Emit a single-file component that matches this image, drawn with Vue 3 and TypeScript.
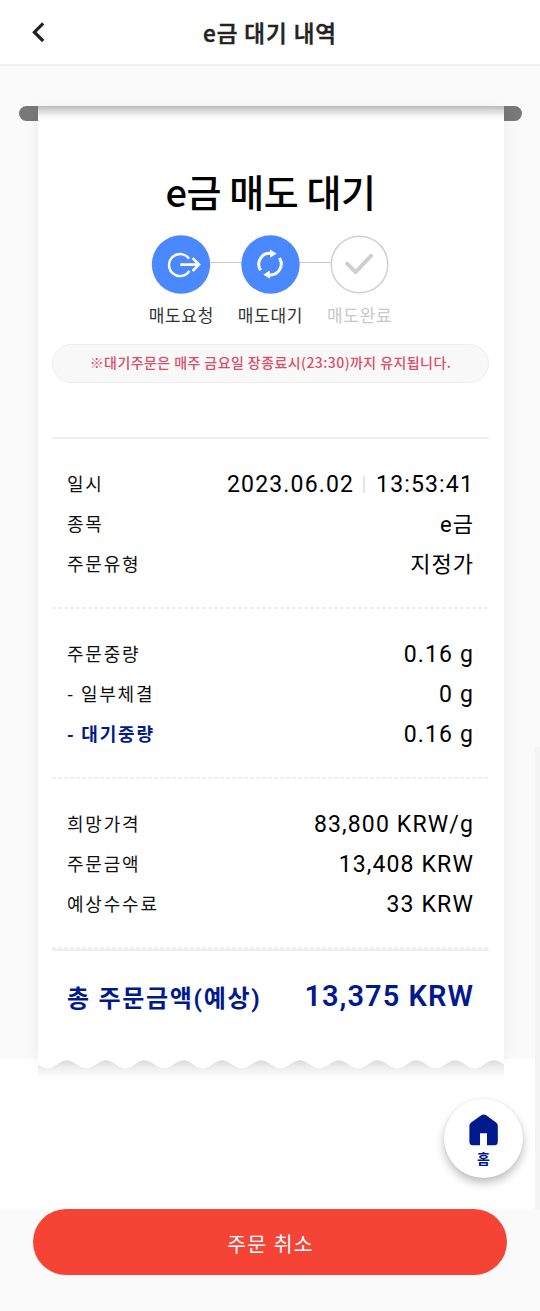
<script setup lang="ts">
interface Row {
  label: string
  value: string
  extra?: string
  accent?: boolean
  hangul?: boolean
}

const groups: Row[][] = [
  [
    { label: '일시', value: '2023.06.02', extra: '13:53:41' },
    { label: '종목', value: 'e금', hangul: true },
    { label: '주문유형', value: '지정가', hangul: true },
  ],
  [
    { label: '주문중량', value: '0.16 g' },
    { label: '- 일부체결', value: '0 g' },
    { label: '- 대기중량', value: '0.16 g', accent: true },
  ],
  [
    { label: '희망가격', value: '83,800 KRW/g' },
    { label: '주문금액', value: '13,408 KRW' },
    { label: '예상수수료', value: '33 KRW' },
  ],
]

// Torn lower edge of the receipt: twelve sine periods over the card width.
const width = 466
const period = width / 12
let wave = 'M0 0'
for (let x = 0; x <= width; x += 1) {
  const y = 6.3 + 4 * Math.cos(((x - 9.5) / period) * Math.PI * 2)
  wave += ` L${x} ${y.toFixed(2)}`
}
wave += ` L${width} 0 Z`
</script>

<template>
  <div class="page">
    <header class="topbar">
      <button class="back" aria-label="뒤로">
        <svg width="16" height="24" viewBox="0 0 16 24">
          <path d="M13.2 3.3 4.4 12.2l8.8 8.8" fill="none" stroke="#222" stroke-width="3.2" />
        </svg>
      </button>
      <h1>e금 대기 내역</h1>
    </header>

    <main class="content">
      <div class="slot">
        <article class="receipt">
          <h2>e금 매도 대기</h2>

          <ol class="steps">
            <li class="step">
              <svg width="60" height="60" viewBox="0 0 60 60">
                <circle cx="30" cy="29.5" r="29.2" fill="#4a88ff" />
                <g fill="none" stroke="#fff" stroke-width="2.4">
                  <path d="M38.1 23.8A11 11 0 1 0 38.4 35.9" />
                  <path d="M29.3 29.6H48M41.6 23.2l6.4 6.4-6.4 6.4" stroke-width="2.6" />
                </g>
              </svg>
              <span>매도요청</span>
            </li>
            <li class="step">
              <svg width="60" height="60" viewBox="0 0 60 60">
                <circle cx="29.5" cy="29.5" r="29.2" fill="#4a88ff" />
                <g fill="none" stroke="#fff" stroke-width="3">
                  <path d="M19.6 35.2A10.9 10.9 0 0 1 30 18.4" />
                  <path d="M38.4 23A10.9 10.9 0 0 1 28 39.8" />
                </g>
                <path d="M28.9 14.5 35.6 18.4 29.4 22.7Z M29.1 43.7 22.4 39.8 28.6 35.5Z" fill="#fff" />
              </svg>
              <span>매도대기</span>
            </li>
            <li class="step pending">
              <svg width="60" height="60" viewBox="0 0 60 60">
                <circle cx="29.5" cy="29.5" r="28.3" fill="#fff" stroke="#d0d0d0" stroke-width="1.5" />
                <path d="m17.2 28.6 8.4 8.6L41 20.8" fill="none" stroke="#cfcfcf" stroke-width="4" stroke-linecap="round" stroke-linejoin="round" />
              </svg>
              <span>매도완료</span>
            </li>
          </ol>

          <p class="notice">※대기주문은 매주 금요일 장종료시(23:30)까지 유지됩니다.</p>

          <div class="details">
            <dl v-for="(group, g) in groups" :key="g" class="group">
              <div v-for="row in group" :key="row.label" class="row">
                <dt :class="{ accent: row.accent }">{{ row.label }}</dt>
                <dd :class="{ hangul: row.hangul }">
                  <span>{{ row.value }}</span>
                  <template v-if="row.extra">
                    <i class="bar"></i>
                    <span>{{ row.extra }}</span>
                  </template>
                </dd>
              </div>
            </dl>
          </div>

          <div class="total">
            <span class="total-label">총 주문금액(예상)</span>
            <strong>13,375 KRW</strong>
          </div>

          <svg class="edge" width="466" height="20" viewBox="0 0 466 20">
            <defs>
              <linearGradient id="edge-shade" x1="0" y1="0" x2="0" y2="1">
                <stop offset="0.1" stop-color="#dadada" />
                <stop offset="0.5" stop-color="#ededed" />
                <stop offset="1" stop-color="#fdfdfd" />
              </linearGradient>
            </defs>
            <rect y="0" width="466" height="19" fill="url(#edge-shade)" />
            <path :d="wave" fill="#fff" />
          </svg>
        </article>
      </div>
    </main>

    <footer class="footer">
      <button class="cancel">주문 취소</button>
    </footer>

    <div class="scroll-thumb"></div>

    <button class="home">
      <svg width="30" height="32" viewBox="0 0 30 32">
        <path d="M12.3 1.3a4.2 4.2 0 0 1 4.9 0l9.9 7.1a4 4 0 0 1 1.7 3.3v16.1a3.5 3.5 0 0 1-3.5 3.5H18V19.2h-7v12.1H3.9a3.5 3.5 0 0 1-3.5-3.5V11.7a4 4 0 0 1 1.7-3.3Z" fill="#001a8d" />
      </svg>
      <span>홈</span>
    </button>
  </div>
</template>

<style>
body {
  margin: 0;
  background: #fafafa;
}
</style>

<style scoped>
.page {
  position: relative;
  width: 540px;
  height: 1311px;
  display: flex;
  flex-direction: column;
  overflow: hidden;
  background: #fff;
  color: #000;
  font-family: Roboto, "Noto Sans CJK KR", sans-serif;
}
button {
  border: 0;
  padding: 0;
  font-family: inherit;
}
h1,
h2,
p,
ol,
dl,
dd {
  margin: 0;
  padding: 0;
}
.topbar {
  box-sizing: border-box;
  height: 66px;
  flex: none;
  display: grid;
  grid-template-columns: 60px 1fr 60px;
  align-items: center;
  border-bottom: 2px solid #f0f0f0;
  background: #fff;
}
.back {
  height: 24px;
  margin-left: 30px;
  text-align: left;
  background: none;
}
.back svg {
  display: block;
}
h1 {
  text-align: center;
  font-family: "Noto Sans CJK KR", sans-serif;
  font-size: 22.5px;
  line-height: 32px;
  font-weight: 500;
  letter-spacing: 0.95px;
  color: #222;
  -webkit-text-stroke: 0.5px #222;
}
.content {
  flex: none;
  box-sizing: border-box;
  height: 993px;
  padding: 40px 18px 0 19px;
  background: #fafafa;
}
.slot {
  height: 14.5px;
  padding: 0 18.5px;
  border-radius: 8px;
  background: #787878;
}
.receipt {
  box-sizing: border-box;
  width: 466px;
  height: 953px;
  padding: 58px 14.5px 0;
  display: flex;
  flex-direction: column;
  background: linear-gradient(#b9b9b9, #dcdcdc 5px, #f6f6f6 10px, #fff 14px);
  box-shadow: 0 3px 12px rgba(0, 0, 0, 0.07);
}
h2 {
  height: 54px;
  line-height: 54px;
  text-align: center;
  font-family: "Noto Sans CJK KR", sans-serif;
  font-size: 38px;
  font-weight: 500;
  letter-spacing: -0.4px;
}
.steps {
  list-style: none;
  display: flex;
  justify-content: center;
  margin-top: 17px;
  background: linear-gradient(#c8c8c8, #c8c8c8) center 27px / 150px 1px no-repeat;
}
.step {
  width: 89.2px;
  height: 104px;
  display: flex;
  flex-direction: column;
  align-items: center;
  font-size: 17px;
  line-height: 24px;
  color: #333;
}
.step svg {
  flex: none;
}
.step span {
  margin-top: 9px;
  letter-spacing: 0.7px;
}
.step.pending {
  color: #c8c8c8;
}
.notice {
  box-sizing: border-box;
  height: 39px;
  margin-top: 5px;
  border: 1px solid #eee;
  border-radius: 20px;
  background: #f8f8f8;
  color: #dc4e69;
  text-align: center;
  font-family: "Noto Sans CJK KR", sans-serif;
  font-size: 14px;
  font-weight: 500;
  letter-spacing: 0.42px;
  line-height: 35px;
  white-space: nowrap;
}
.details {
  margin-top: 54px;
  border-top: 2px solid #efefef;
  border-bottom: 2px solid #efefef;
}
.group {
  padding: 25px 15px;
  background: repeating-linear-gradient(90deg, #efefef 0 4px, transparent 4px 6px) 0 100% / 100% 2px no-repeat;
}
.row {
  height: 40px;
  display: flex;
  align-items: center;
  justify-content: space-between;
}
dt {
  font-family: "Noto Sans CJK KR", sans-serif;
  font-size: 18px;
  line-height: 26px;
  letter-spacing: 1.8px;
  color: #111;
  margin-top: -2px;
}
dt.accent {
  font-weight: 700;
  color: #001a8d;
}
dd {
  display: flex;
  align-items: center;
  font-size: 23px;
  letter-spacing: 1.15px;
}
dd.hangul {
  font-size: 22px;
  line-height: 30px;
  letter-spacing: 1px;
  margin-top: 1px;
}
.bar {
  width: 2px;
  height: 17px;
  margin: 0 11px 0 9px;
  background: #e6e6e6;
}
.total {
  height: 92px;
  padding: 0 15px;
  display: flex;
  align-items: center;
  justify-content: space-between;
  color: #001a8d;
  font-weight: 700;
}
.total-label {
  font-size: 24px;
  letter-spacing: 1.7px;
  margin-top: -2px;
}
.total strong {
  font-size: 29px;
  font-weight: 600;
  letter-spacing: 1.05px;
  margin-top: -2px;
}
.edge {
  display: block;
  flex: none;
  margin: auto -14.5px -19px;
}
.footer {
  margin-top: 151px;
  flex: 1;
  padding: 0 33px;
  background: #fafafa;
}
.cancel {
  display: block;
  width: 474px;
  height: 66px;
  margin-top: -1px;
  border-radius: 33px;
  background: #f54336;
  color: #fff;
  font-size: 20.5px;
  letter-spacing: 1.2px;
  padding: 1px 0 0 1px;
}
.scroll-thumb {
  position: absolute;
  right: 0;
  top: 747px;
  width: 5.5px;
  height: 463px;
  background: #f4f4f4;
}
.home {
  position: absolute;
  left: 444px;
  top: 1099px;
  width: 79px;
  height: 79px;
  display: flex;
  flex-direction: column;
  align-items: center;
  border-radius: 50%;
  background: #fff;
  box-shadow: 0 5px 10px rgba(0, 0, 0, 0.25), 0 0 3px rgba(0, 0, 0, 0.06);
  color: #001a8d;
  font-size: 14px;
  font-weight: 700;
  line-height: 20px;
}
.home svg {
  margin-top: 15px;
}
.home span {
  margin-top: 3px;
}
</style>
